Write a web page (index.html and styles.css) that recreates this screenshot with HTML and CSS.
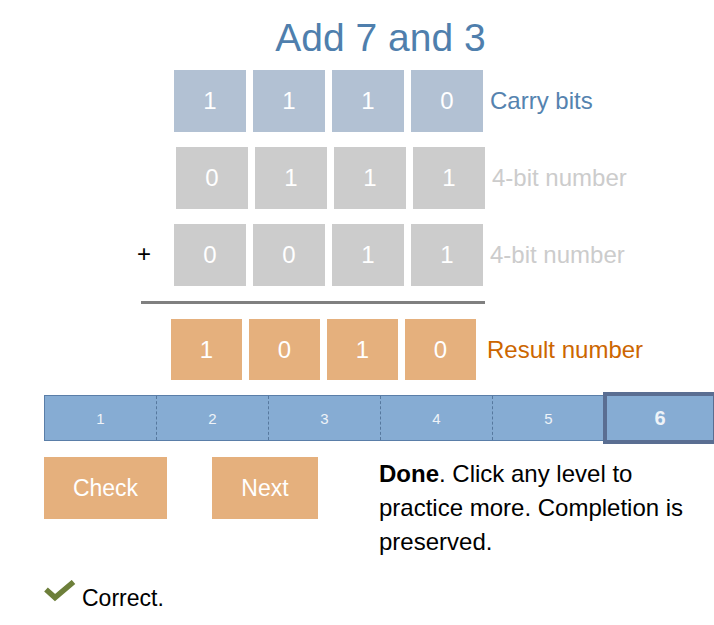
FILE: index.html
```html
<!DOCTYPE html>
<html lang="en">
<head>
<meta charset="utf-8">
<title>Add 7 and 3</title>
<link rel="stylesheet" href="styles.css">
</head>
<body>
<div class="page">
  <h1 class="title">Add 7 and 3</h1>
  <div class="sum">
    <div class="row">
      <span class="sign"></span>
      <div class="bits">
        <span class="bit bit-carry">1</span>
        <span class="bit bit-carry">1</span>
        <span class="bit bit-carry">1</span>
        <span class="bit bit-carry">0</span>
      </div>
      <span class="label label-carry">Carry bits</span>
    </div>
    <div class="row row-b">
      <span class="sign"></span>
      <div class="bits">
        <span class="bit bit-input">0</span>
        <span class="bit bit-input">1</span>
        <span class="bit bit-input">1</span>
        <span class="bit bit-input">1</span>
      </div>
      <span class="label label-input">4-bit number</span>
    </div>
    <div class="row">
      <span class="sign">+</span>
      <div class="bits">
        <span class="bit bit-input">0</span>
        <span class="bit bit-input">0</span>
        <span class="bit bit-input">1</span>
        <span class="bit bit-input">1</span>
      </div>
      <span class="label label-input">4-bit number</span>
    </div>
    <div class="rule"></div>
    <div class="row row-result">
      <span class="sign"></span>
      <div class="bits">
        <span class="bit bit-result">1</span>
        <span class="bit bit-result">0</span>
        <span class="bit bit-result">1</span>
        <span class="bit bit-result">0</span>
      </div>
      <span class="label label-result">Result number</span>
    </div>
  </div>

  <div class="levels">
    <span class="level">1</span>
    <span class="level">2</span>
    <span class="level">3</span>
    <span class="level">4</span>
    <span class="level">5</span>
    <span class="level level-current">6</span>
  </div>

  <div class="controls">
    <button class="btn btn-check" type="button">Check</button>
    <button class="btn btn-next" type="button">Next</button>
    <p class="message"><b class="done">Done</b>. Click any level to practice more. Completion is preserved.</p>
  </div>

  <div class="status">
    <svg class="check-icon" width="32" height="22" viewBox="0 0 32 22" aria-hidden="true">
      <polyline points="2,9.5 11,17.5 29.5,2" fill="none" stroke="#6d7f3a" stroke-width="5.5" stroke-linejoin="miter"/>
    </svg>
    <span class="status-text">Correct.</span>
  </div>
</div>
</body>
</html>
```

FILE: styles.css
```css
html {
  overflow-x: hidden;
}

body {
  margin: 0;
  background: #ffffff;
  font-family: "Liberation Sans", Arial, sans-serif;
  color: #000000;
}

.page {
  width: 673px;
  margin-left: 44px;
  padding-top: 15px;
  display: flex;
  flex-direction: column;
}

.title {
  margin: 0;
  font-size: 39px;
  line-height: 45px;
  font-weight: normal;
  text-align: center;
  color: #4f7fad;
}

.sum {
  margin-top: 10px;
  display: flex;
  flex-direction: column;
  gap: 15px;
}

.row {
  display: flex;
  align-items: center;
  height: 62px;
  margin-left: 93px;
}

.row-b {
  margin-left: 95px;
}

.row-result {
  margin-left: 90px;
  height: 61px;
}

.sign {
  width: 37px;
  flex: none;
  font-size: 24px;
  line-height: 1;
  padding-bottom: 2px;
}

.bits {
  display: flex;
  gap: 7px;
}

.bit {
  width: 72px;
  height: 62px;
  display: flex;
  align-items: center;
  justify-content: center;
  color: #ffffff;
  font-size: 24px;
}

.bit-carry {
  background: #b2c1d3;
}

.bit-input {
  background: #cccccc;
}

.bit-result {
  width: 71px;
  height: 61px;
  background: #e5b07d;
}

.label {
  margin-left: 7px;
  font-size: 24px;
  white-space: nowrap;
}

.label-carry {
  color: #5583af;
}

.label-input {
  color: #cccccc;
}

.label-result {
  margin-left: 11px;
  color: #cc6600;
}

.rule {
  width: 344px;
  height: 3px;
  margin-left: 97px;
  background: #808080;
}

.levels {
  margin-top: 15px;
  height: 46px;
  box-sizing: border-box;
  display: flex;
  border: 1px solid #5a7ea8;
  border-right: none;
  background: #86acd3;
}

.level {
  width: 112px;
  box-sizing: border-box;
  flex: none;
  display: flex;
  align-items: center;
  justify-content: center;
  border-right: 1px dashed #56789e;
  color: #eef3f8;
  font-size: 15px;
}

.level-current {
  flex: 1;
  width: auto;
  margin: -4px 0 -4px -2px;
  border: 4px solid #5a6e92;
  background: #86acd3;
  font-size: 20px;
  font-weight: bold;
}

.controls {
  margin-top: 16px;
  display: flex;
  align-items: flex-start;
}

.btn {
  height: 62px;
  padding: 0;
  border: none;
  background: #e5b07d;
  color: #ffffff;
  font-family: "Liberation Sans", Arial, sans-serif;
  font-size: 23px;
  display: flex;
  align-items: center;
  justify-content: center;
}

.btn-check {
  width: 123px;
}

.btn-next {
  width: 106px;
  margin-left: 45px;
}

.message {
  margin: 0 0 0 61px;
  width: 312px;
  font-size: 24px;
  line-height: 34px;
}

.done {
  font-weight: bold;
}

.status {
  margin-top: 22px;
  display: flex;
  align-items: flex-start;
  font-size: 23px;
  line-height: 34px;
}

.check-icon {
  flex: none;
  margin-top: -1px;
}

.status-text {
  margin-left: 6px;
}
```
